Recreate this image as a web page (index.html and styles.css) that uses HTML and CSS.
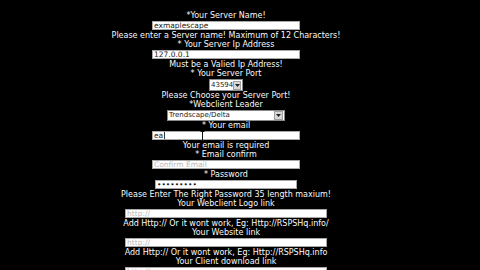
FILE: index.html
```html
<!DOCTYPE html>
<html>
<head>
<meta charset="utf-8">
<link rel="stylesheet" href="styles.css">
</head>
<body>
<form class="form">
  <div class="lbl first">*Your Server Name!</div>
  <input class="fld w148" type="text" value="exmaplescape">
  <div class="lbl">Please enter a Server name! Maximum of 12 Characters!</div>
  <div class="lbl">* Your Server Ip Address</div>
  <input class="fld w148" type="text" value="127.0.0.1">
  <div class="lbl">Must be a Valied Ip Address!</div>
  <div class="lbl">* Your Server Port</div>
  <div class="sel port"><span class="sel-txt">43594</span><span class="sel-btn"><svg width="5" height="3" viewBox="0 0 5 3"><path d="M0 0H5L2.5 3Z" fill="#222"/></svg></span></div>
  <div class="lbl">Please Choose your Server Port!</div>
  <div class="lbl">*Webclient Leader</div>
  <div class="sel loader"><span class="sel-txt">Trendscape/Delta</span><span class="sel-btn"><svg width="5" height="3" viewBox="0 0 5 3"><path d="M0 0H5L2.5 3Z" fill="#222"/></svg></span></div>
  <div class="lbl">* Your email</div>
  <div class="fldwrap">
    <input class="fld w148" type="text" value="ea">
    <span class="caret"></span>
    <svg class="ibeam" width="5" height="10" viewBox="0 0 5 10"><path d="M0.5 0.5H4.5M2.5 0.5V9.5M0.5 9.5H4.5" stroke="#111" stroke-width="1" fill="none"/></svg>
  </div>
  <div class="lbl">Your email is required</div>
  <div class="lbl">* Email confirm</div>
  <input class="fld w148" type="text" placeholder="Confirm Email">
  <div class="lbl">* Password</div>
  <input class="fld w142" type="password" value="123456789">
  <div class="lbl">Please Enter The Right Password 35 length maxium!</div>
  <div class="lbl">Your Webclient Logo link</div>
  <input class="fld w202" type="text" placeholder="http://">
  <div class="lbl">Add Http:// Or it wont work, Eg: Http://RSPSHq.info/</div>
  <div class="lbl">Your Website link</div>
  <input class="fld w202" type="text" placeholder="http://">
  <div class="lbl">Add Http:// Or it wont work, Eg: Http://RSPSHq.info</div>
  <div class="lbl">Your Client download link</div>
  <input class="fld w202" type="text" placeholder="http://">
</form>
</body>
</html>
```
FILE: styles.css
```css
html, body {
  margin: 0;
  padding: 0;
  background: #000;
  overflow: hidden;
}
.form {
  width: 452px;
  display: flex;
  flex-direction: column;
  align-items: center;
  font-family: "DejaVu Sans", Verdana, sans-serif;
  font-size: 8px;
  color: #fafafa;
}
.lbl {
  line-height: 9px;
  height: 9px;
  white-space: nowrap;
}
.lbl.first {
  margin-top: 11px;
}
.fld {
  box-sizing: border-box;
  height: 9px;
  margin: 1px 0;
  padding: 0 1px;
  border: 1px solid #a8a8a8;
  background: #fff;
  font-family: "DejaVu Sans", Verdana, sans-serif;
  font-size: 7.5px;
  color: #1a1a1a;
  outline: none;
}
.fld::placeholder {
  color: #b8b8b8;
}
.w148 { width: 148px; }
.w142 { width: 142px; }
.w202 { width: 202px; }
.fldwrap {
  position: relative;
  height: 11px;
}
.caret {
  position: absolute;
  left: 12px;
  top: 2px;
  width: 1px;
  height: 7px;
  background: #333;
}
.ibeam {
  position: absolute;
  left: 48px;
  top: 1px;
}
.sel {
  box-sizing: border-box;
  display: flex;
  align-items: center;
  justify-content: space-between;
  background: #fff;
  border: 1px solid #8a8a8a;
  color: #1a1a1a;
  font-size: 7px;
  margin: 1px 0 0;
}
.sel-txt {
  padding-left: 1px;
  line-height: 9px;
}
.sel-btn {
  box-sizing: border-box;
  display: flex;
  align-items: center;
  justify-content: center;
  width: 9px;
  height: 9px;
  margin-right: 1px;
  background: #d8d8d8;
  border: 1px solid #a0a0a0;
}
.port { width: 34px; height: 12px; }
.loader { width: 118px; height: 11px; }
```
